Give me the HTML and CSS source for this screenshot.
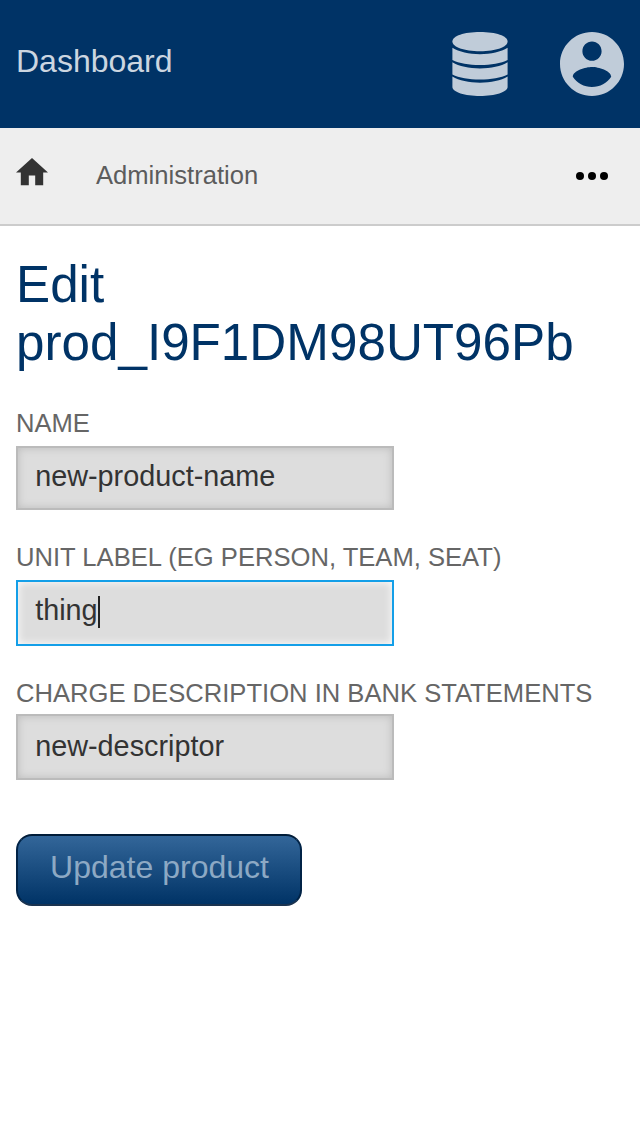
FILE: index.html
```html
<!DOCTYPE html>
<html lang="en">
<head>
<meta charset="utf-8">
<title>Edit product</title>
<link rel="stylesheet" href="styles.css">
</head>
<body>
<header class="topbar">
  <a class="brand">Dashboard</a>
  <nav class="tools">
    <svg class="database" viewBox="0 0 56 64" width="56" height="64" aria-label="Database">
      <path d="M.4 9.500C.4 4 12 0 28 0s27.600 4 27.600 9.500S44 19.200 28 19.200.4 15 .4 9.500z"/>
      <path d="M.4 15.800C7 20 17 22.200 28 22.200s21-2.200 27.600-6.400v12.200C49 31.200 39 33 28 33S7 31.200 .4 28z"/>
      <path d="M.4 30.200C7 34.200 17 36.400 28 36.400s21-2.200 27.600-6.200v12.200C49 45.600 39 47.400 28 47.400S7 45.600 .4 42.400z"/>
      <path d="M.4 44.600C7 48.600 17 50.800 28 50.800s21-2.200 27.600-6.200V55c0 5-12.600 9-27.600 9S.4 60 .4 55z"/>
    </svg>
    <svg class="account" viewBox="2 2 20 20" width="64" height="64" aria-label="Account">
      <path d="M12 2C6.480 2 2 6.480 2 12s4.480 10 10 10 10-4.480 10-10S17.520 2 12 2zm0 3c1.660 0 3 1.340 3 3s-1.340 3-3 3-3-1.340-3-3 1.340-3 3-3zm0 14.200c-2.500 0-4.710-1.280-6-3.220.030-1.990 4-3.080 6-3.080 1.990 0 5.970 1.090 6 3.080-1.290 1.940-3.500 3.220-6 3.220z"/>
    </svg>
  </nav>
</header>
<nav class="crumbs">
  <svg class="home" viewBox="2 3 20 17" width="32" height="27.200" aria-label="Home"><path d="M10 20v-6h4v6h5v-8h3L12 3 2 12h3v8z"/></svg>
  <a class="crumb">Administration</a>
  <svg class="more" viewBox="0 0 32 8" width="32" height="8" aria-label="More"><circle cx="4" cy="4" r="4"/><circle cx="16" cy="4" r="4"/><circle cx="28" cy="4" r="4"/></svg>
</nav>
<main class="content">
  <h1 class="title">Edit prod_I9F1DM98UT96Pb</h1>
  <div class="field">
    <div class="label">NAME</div>
    <div class="input">new-product-name</div>
  </div>
  <div class="field unit">
    <div class="label">UNIT LABEL (EG PERSON, TEAM, SEAT)</div>
    <div class="input focused">thing<span class="caret"></span></div>
  </div>
  <div class="field descriptor">
    <div class="label">CHARGE DESCRIPTION IN BANK STATEMENTS</div>
    <div class="input">new-descriptor</div>
  </div>
  <button class="submit" type="button">Update product</button>
</main>
</body>
</html>
```

FILE: styles.css
```css
* { box-sizing: border-box; }
body {
  margin: 0;
  background: #fff;
  font-family: "Liberation Sans", Arial, sans-serif;
}
svg { display: block; }
.topbar {
  display: flex;
  justify-content: space-between;
  height: 128px;
  padding: 32px 16px;
  background: #036;
}
.brand {
  padding-top: 11px;
  font-size: 32px;
  line-height: 37px;
  color: #ccd6e0;
}
.tools { display: flex; gap: 52px; }
.database, .account { fill: #c0ccd9; }
.crumbs {
  display: flex;
  height: 98px;
  padding: 30.4px 32px 0 16px;
  background: #eee;
  border-bottom: 2px solid #ccc;
}
.home { fill: #333; }
.crumb {
  margin-left: 48px;
  padding-top: 2px;
  font-size: 25.6px;
  line-height: 30px;
  color: #5c5c5c;
}
.more { margin: 13.6px 0 0 auto; }
.content { padding: 30px 16px; }
.title {
  margin: 0 0 36px;
  font-size: 51.2px;
  line-height: 58px;
  font-weight: 400;
  color: #036;
}
.field { height: 134px; }
.field.unit { height: 136px; }
.field.descriptor { height: 156px; }
.label {
  height: 34px;
  font-size: 25.6px;
  line-height: 30px;
  color: #666;
  white-space: nowrap;
}
.field .input { margin-top: 4px; }
.input {
  display: flex;
  width: 378px;
  height: 64px;
  padding: 12px 17.2px;
  border: 2px solid #bbb;
  background: #ddd;
  box-shadow: inset 0 0 8px #bbb;
  font-size: 28.8px;
  line-height: 33px;
  color: #333;
}
.unit .input, .descriptor .input { height: 66px; }
.field.descriptor .label { height: 32px; }
.descriptor .input { padding-top: 14px; }
.input.focused {
  border-color: #149fe8;
  box-shadow: inset 0 0 8px #fff;
}
.caret { width: 2px; height: 32px; margin-top: 2px; background: #222; }
.submit {
  display: block;
  width: 286px;
  height: 72px;
  padding: 0 0 5px 1px;
  border: 2px solid #012346;
  border-color: #001c38 #012346 #1a3350;
  border-radius: 16px;
  background: linear-gradient(#369, #036) padding-box border-box;
  font: 32px/37px "Liberation Sans", Arial, sans-serif;
  color: #8da9c4;
}
```
